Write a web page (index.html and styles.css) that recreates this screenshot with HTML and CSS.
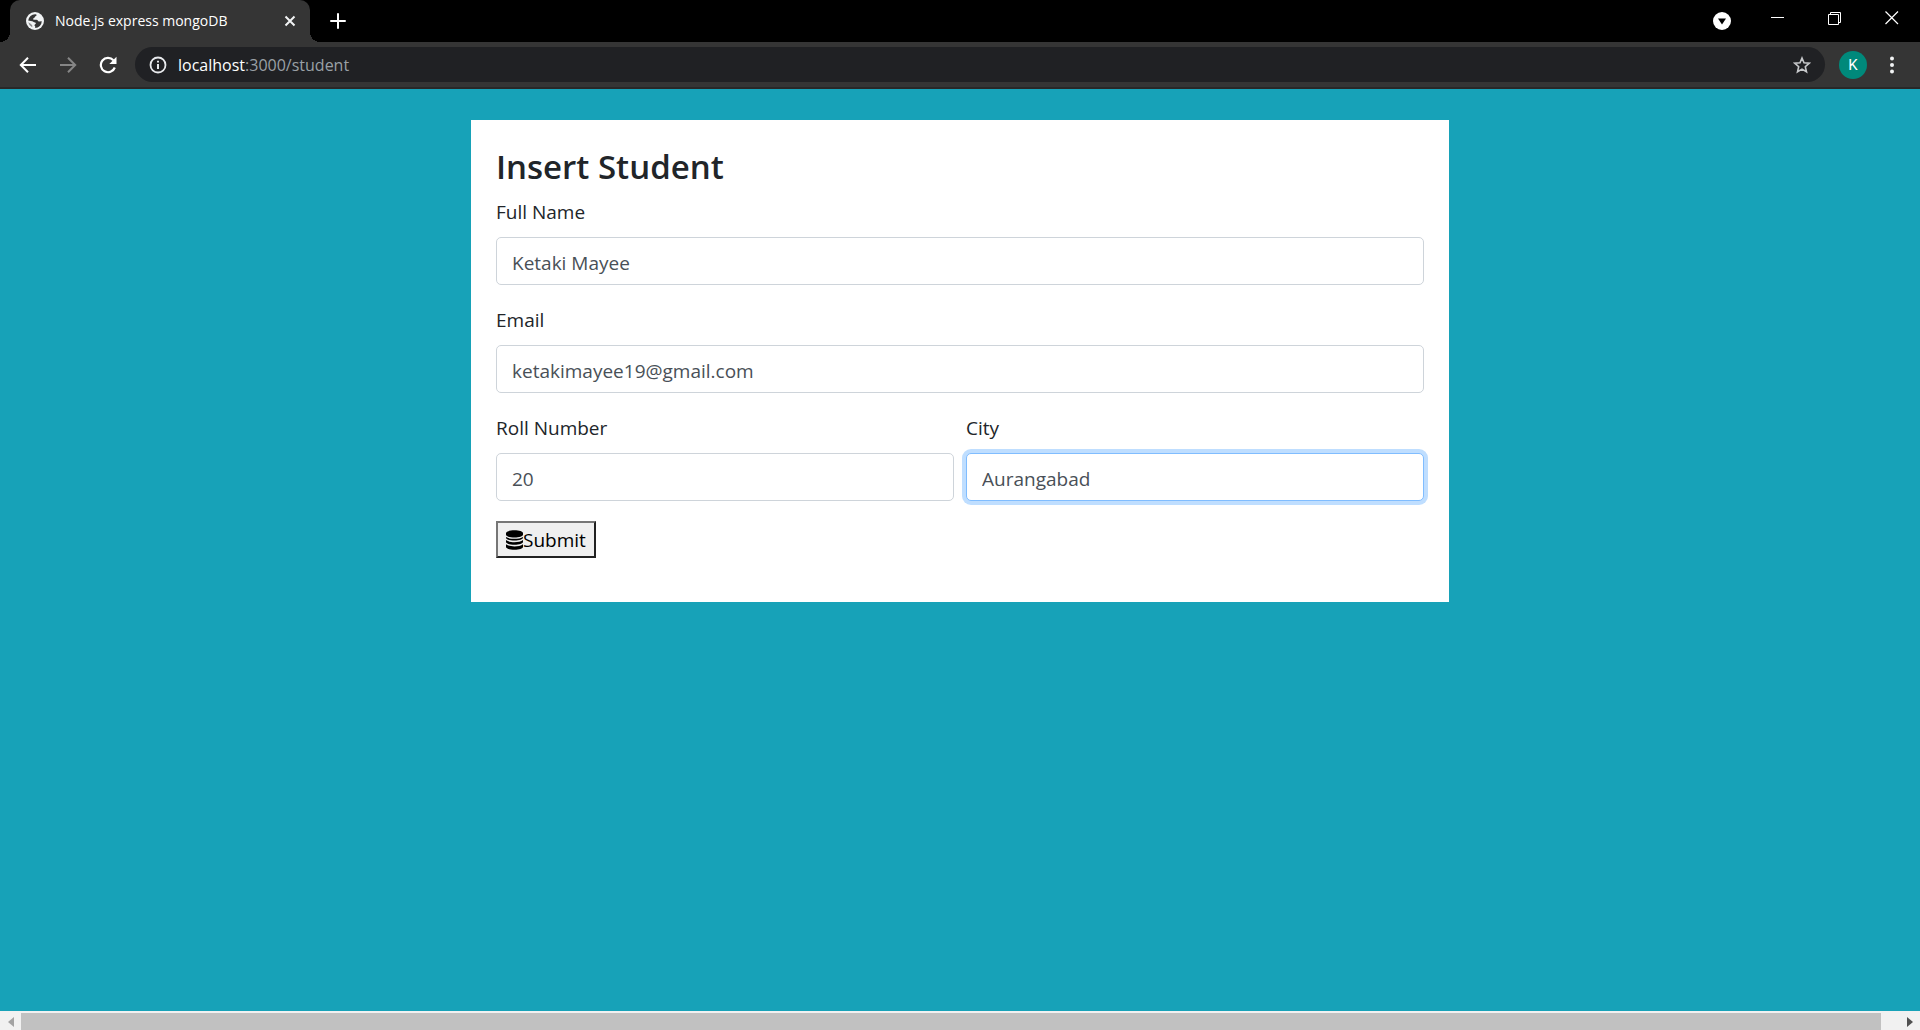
FILE: index.html
```html
<!DOCTYPE html>
<html lang="en">
<head>
<meta charset="utf-8">
<meta name="viewport" content="width=device-width, initial-scale=1">
<title>Node.js express mongoDB</title>
<link rel="stylesheet" href="styles.css">
</head>
<body>
<header class="browser">
  <div class="tabstrip">
    <div class="tab">
      <svg class="favicon" width="18" height="18" viewBox="0 0 18 18" aria-hidden="true">
        <circle cx="9" cy="9" r="9" fill="#f1f3f4"/>
        <path d="M9.500 2.200C11 2.500 10.800 3.600 9.800 4.100C8.800 4.600 9 5.500 8 5.900C7 6.200 7 7.300 7.700 7.700H10.500C11.800 7.900 11.900 9.200 13 9.400L15.800 9.300A6.900 6.900 0 0 1 9.200 15.900V14.200C8 13.700 8.500 12.400 9.500 12C10.200 11.500 9.900 10.700 9 10.600C7.800 10.500 7.400 9.500 6.200 9.300L2.200 8.600A6.900 6.900 0 0 1 9.500 2.200Z" fill="#353535"/>
        <path d="M2.300 10.200L5 12.100C5.500 12.800 6.300 13.200 6.300 14L6.200 15.300A6.900 6.900 0 0 1 2.300 10.200Z" fill="#353535" opacity=".55"/>
      </svg>
      <span class="tab-title">Node.js express mongoDB</span>
      <button class="icon-btn tab-close" type="button" aria-label="Close tab">
        <svg width="12" height="12" viewBox="0 0 12 12"><path d="M1.500 1.500L10.500 10.500M10.500 1.500L1.500 10.500" stroke="#f1f3f4" stroke-width="2"/></svg>
      </button>
    </div>
    <button class="icon-btn new-tab" type="button" aria-label="New tab">
      <svg width="16" height="16" viewBox="0 0 16 16"><path d="M8 1V15M1 8H15" stroke="#fff" stroke-width="2" stroke-linecap="round"/></svg>
    </button>
    <div class="window-controls">
      <button class="icon-btn tab-search" type="button" aria-label="Search tabs">
        <svg width="18" height="18" viewBox="0 0 18 18"><circle cx="9" cy="9" r="9" fill="#fff"/><path d="M5 6.500H13L9 12.500Z" fill="#000"/></svg>
      </button>
      <button class="icon-btn win-btn" type="button" aria-label="Minimize">
        <svg width="14" height="14" viewBox="0 0 14 14"><path d="M0 6.500H13" stroke="#fff"/></svg>
      </button>
      <button class="icon-btn win-btn" type="button" aria-label="Restore">
        <svg width="14" height="14" viewBox="0 0 14 14"><path d="M.5 3.500H10.500V13.500H.5ZM2.500 3.500V1.500H12.500V11.500H10.500" fill="none" stroke="#fff"/></svg>
      </button>
      <button class="icon-btn win-btn" type="button" aria-label="Close">
        <svg width="14" height="14" viewBox="0 0 14 14"><path d="M.5 .5L13 13M13 .5L.5 13" stroke="#fff" stroke-width="1.200"/></svg>
      </button>
    </div>
  </div>
  <div class="toolbar">
    <button class="icon-btn nav-btn" type="button" aria-label="Back">
      <svg width="18" height="18" viewBox="0 0 18 18"><path d="M17 9H2.500M9 1.800L1.800 9L9 16.200" fill="none" stroke="#fff" stroke-width="2"/></svg>
    </button>
    <button class="icon-btn nav-btn" type="button" aria-label="Forward" disabled>
      <svg width="18" height="18" viewBox="0 0 18 18"><path d="M1 9H15.500M9 1.800L16.200 9L9 16.200" fill="none" stroke="#868686" stroke-width="2"/></svg>
    </button>
    <button class="icon-btn nav-btn" type="button" aria-label="Reload">
      <svg width="18" height="18" viewBox="0 0 18 18"><path d="M15.800 11.500A7.200 7.200 0 1 1 14.400 4.200" fill="none" stroke="#fff" stroke-width="2.200"/><path d="M17.500 .8V8H10.300Z" fill="#fff"/></svg>
    </button>
    <div class="omnibox">
      <svg width="18" height="18" viewBox="0 0 18 18" aria-hidden="true"><circle cx="9" cy="9" r="7.500" fill="none" stroke="#e8eaed" stroke-width="1.800"/><path d="M9 7.900V13M9 4.700V6.600" stroke="#e8eaed" stroke-width="2"/></svg>
      <span class="url"><span class="url-host">localhost</span>:3000/student</span>
      <button class="icon-btn star" type="button" aria-label="Bookmark this tab">
        <svg width="18" height="18" viewBox="0 0 18 18"><path d="M9 2L11 6.700L16.200 7.200L12.300 10.700L13.500 15.800L9 13.100L4.500 15.800L5.700 10.700L1.800 7.200L7 6.700Z" fill="none" stroke="#c6c8ca" stroke-width="1.600"/></svg>
      </button>
    </div>
    <button class="avatar" type="button" aria-label="Profile">K</button>
    <button class="icon-btn menu" type="button" aria-label="Menu">
      <svg width="4" height="18" viewBox="0 0 4 18"><circle cx="2" cy="2.500" r="2" fill="#f1f3f4"/><circle cx="2" cy="9" r="2" fill="#f1f3f4"/><circle cx="2" cy="15.500" r="2" fill="#f1f3f4"/></svg>
    </button>
  </div>
</header>
<main class="page">
  <form class="card">
    <h1 class="heading">Insert Student</h1>
    <div class="group">
      <label for="fullName">Full Name</label>
      <input class="control" id="fullName" type="text" value="Ketaki Mayee">
    </div>
    <div class="group">
      <label for="email">Email</label>
      <input class="control" id="email" type="text" value="ketakimayee19@gmail.com">
    </div>
    <div class="row">
      <div class="group">
        <label for="roll">Roll Number</label>
        <input class="control" id="roll" type="text" value="20">
      </div>
      <div class="group">
        <label for="city">City</label>
        <input class="control active" id="city" type="text" value="Aurangabad">
      </div>
    </div>
    <button class="submit" type="button">
      <svg width="17" height="20" viewBox="0 0 448 512" aria-hidden="true"><path d="M448 73.143v45.714C448 159.143 347.667 192 224 192S0 159.143 0 118.857V73.143C0 32.857 100.333 0 224 0s224 32.857 224 73.143zM448 176v22C448 239 347.667 272 224 272S0 239 0 198V176c48.125 33.143 136.208 48.572 224 48.572S399.874 209.143 448 176zm0 80v52.857C448 349.143 347.667 382 224 382S0 349.143 0 308.857V256c48.125 43.143 136.208 58.572 224 58.572S399.874 299.143 448 256zm0 110v72.857C448 479.143 347.667 512 224 512S0 479.143 0 438.857V366c48.125 43.143 136.208 58.572 224 58.572S399.874 409.143 448 366z"/></svg>Submit
    </button>
  </form>
</main>
<div class="scrollbar" aria-hidden="true">
  <span class="arrow"><svg width="6" height="10" viewBox="0 0 6 10"><path d="M6 0V10L0 5Z" fill="#a3a3a3"/></svg></span>
  <span class="thumb"></span>
  <span class="arrow"><svg width="6" height="10" viewBox="0 0 6 10"><path d="M0 0V10L6 5Z" fill="#505050"/></svg></span>
</div>
</body>
</html>
```
FILE: styles.css
```css
* { box-sizing: border-box; }

body {
  margin: 0;
  min-height: 100vh;
  display: flex;
  flex-direction: column;
  background: #17a2b8;
  color: #212529;
  font: 19px/30px "Open Sans", "Noto Sans", sans-serif;
}

svg { display: block; flex: none; }

.icon-btn {
  display: flex;
  align-items: center;
  justify-content: center;
  padding: 0;
  border: 0;
  background: none;
}

/* Browser frame */
.tabstrip {
  display: flex;
  height: 42px;
  padding-left: 10px;
  background: #000;
}

.tab {
  position: relative;
  display: flex;
  align-items: center;
  width: 300px;
  padding: 0 12px 0 16px;
  border-radius: 10px 10px 0 0;
  background: #353535;
  color: #fff;
  font-size: 14px;
  line-height: 20px;
}

.tab::before,
.tab::after {
  content: "";
  position: absolute;
  bottom: 0;
  width: 10px;
  height: 10px;
}

.tab::before {
  right: 100%;
  background: radial-gradient(circle at 0 0, transparent 10px, #353535 10px);
}

.tab::after {
  left: 100%;
  background: radial-gradient(circle at 100% 0, transparent 10px, #353535 10px);
}

.tab-title { flex: 1; margin-left: 11px; }
.tab-close { width: 16px; height: 16px; }
.new-tab { width: 56px; }
.window-controls { display: flex; margin-left: auto; }
.tab-search { width: 28px; margin-right: 13px; }
.win-btn { width: 57px; height: 36px; }

.toolbar {
  display: flex;
  align-items: center;
  height: 47px;
  padding: 0 18px 0 8px;
  border-bottom: 2px solid #282828;
  background: #353535;
}

.nav-btn { width: 40px; height: 34px; }

.omnibox {
  flex: 1;
  display: flex;
  align-items: center;
  height: 35px;
  margin: 0 14px 0 7px;
  padding: 0 14px;
  border-radius: 18px;
  background: #202124;
}

.url { flex: 1; margin-left: 11px; color: #9aa0a6; font-size: 16px; }
.url-host { color: #fff; }

.avatar {
  width: 28px;
  height: 28px;
  padding: 0;
  border: 0;
  border-radius: 50%;
  background: #00897b;
  color: #fff;
  font: 15px/28px Roboto, sans-serif;
}

.menu { width: 20px; height: 28px; margin-left: 15px; }

/* Student form */
.page { flex: 1; padding: 31px 16px; }

.card {
  max-width: 978px;
  margin: 0 auto;
  padding: 26px 25px 44px;
  background: #fff;
}

.heading {
  margin: 0 0 9px;
  font-size: 33px;
  line-height: 42px;
  font-weight: 600;
}

.group { margin-bottom: 20px; }
.group label { display: block; margin-bottom: 10px; }

.row {
  display: grid;
  grid-template-columns: 1fr 1fr;
  gap: 12px;
}

.control {
  display: block;
  width: 100%;
  height: 48px;
  padding: 3px 15px 0;
  border: 1px solid #ced4da;
  border-radius: 5px;
  background: #fff;
  color: #495057;
  font: inherit;
}

.control.active {
  border-color: #80bdff;
  box-shadow: 0 0 0 4px #bfdeff;
}

.submit {
  display: flex;
  align-items: center;
  height: 37px;
  padding: 0 8px;
  border: 2px solid;
  border-color: #767676 #212121 #212121 #767676;
  background: #efefef;
  color: #000;
  font: inherit;
}

/* Horizontal scrollbar */
.scrollbar {
  display: flex;
  height: 19px;
  padding: 2px 0 0;
  background: #f1f1f1;
}

.arrow { display: flex; align-items: center; justify-content: center; width: 21px; }
.thumb { flex: 1; margin-right: 18px; background: #c1c1c1; }
```
